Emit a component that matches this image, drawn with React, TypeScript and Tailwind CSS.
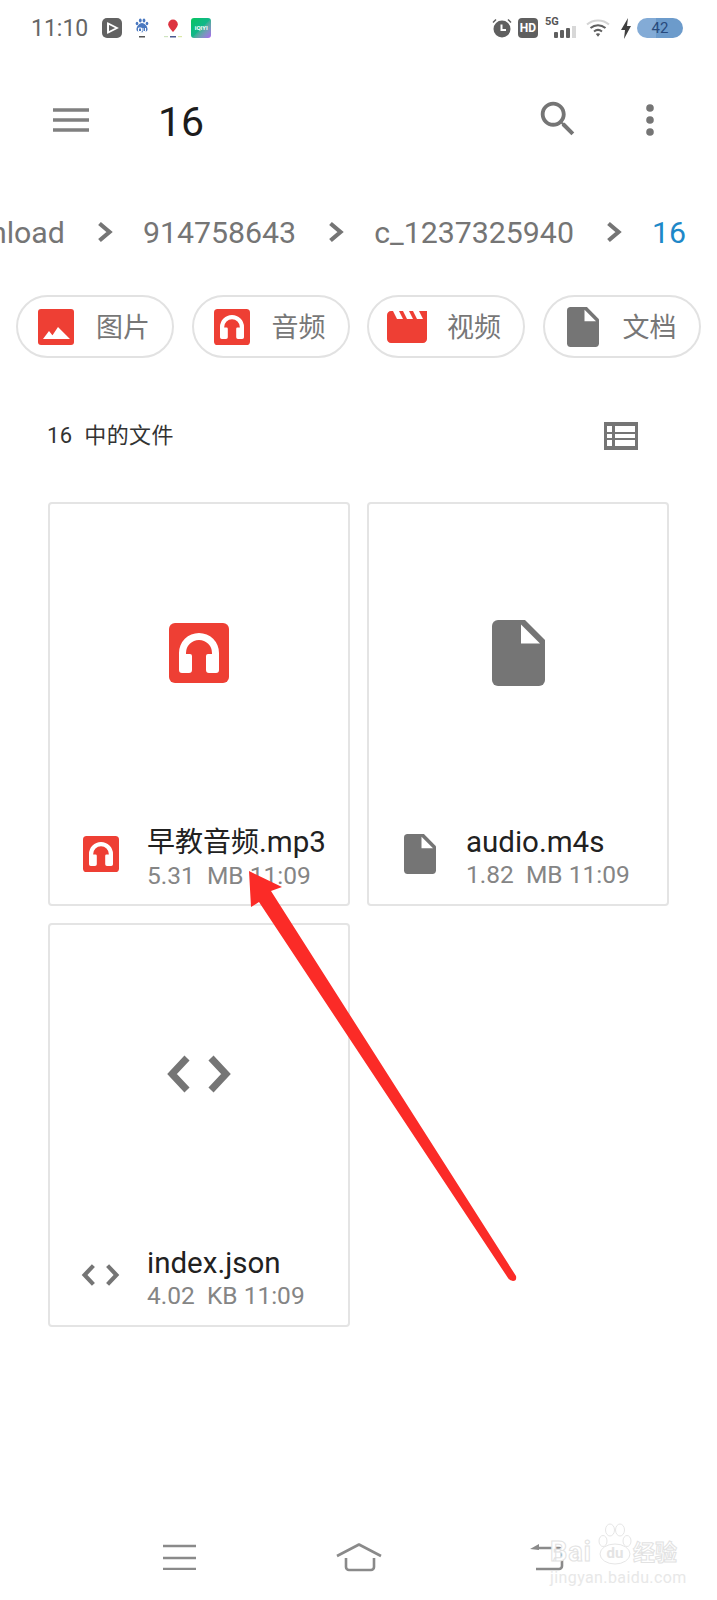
const RED = "#ee3f34";
const GREY = "#757575";

function AudioIcon({ size }: { size: number }) {
  return (
    <svg width={size} height={size} viewBox="0 0 60 60" className="shrink-0">
      <rect width="60" height="60" rx="6" fill={RED} />
      <path
        d="M10 30A20 20 0 0 1 50 30V47a3 3 0 0 1-3 3H40a3 3 0 0 1-3-3V33a2 2 0 0 1 2-2H43V30A13 13 0 0 0 17 30V31H21a2 2 0 0 1 2 2V47a3 3 0 0 1-3 3H13a3 3 0 0 1-3-3Z"
        fill="#fff"
      />
    </svg>
  );
}

function DocIcon({ w, h }: { w: number; h: number }) {
  return (
    <svg width={w} height={h} viewBox="0 0 53 66" className="shrink-0">
      <path d="M6 0H33L53 20V60a6 6 0 0 1-6 6H6a6 6 0 0 1-6-6V6a6 6 0 0 1 6-6Z" fill={GREY} />
      <path d="M29 4.5 48 23.5H29Z" fill="#fff" />
    </svg>
  );
}

function CodeIcon({ w, h, sw }: { w: number; h: number; sw: number }) {
  return (
    <svg width={w} height={h} viewBox="0 0 66 38" className="shrink-0">
      <path d="M21 3 6 19 21 35M45 3 60 19 45 35" fill="none" stroke={GREY} strokeWidth={sw} />
    </svg>
  );
}

function ImageIcon() {
  return (
    <svg width="36" height="36" viewBox="0 0 36 36" className="shrink-0">
      <rect width="36" height="36" rx="3" fill={RED} />
      <path d="M12 30 20 18 32 30ZM5 30 11 22 15 27 13 30Z" fill="#fff" />
    </svg>
  );
}

function MovieIcon() {
  return (
    <svg width="40" height="32" viewBox="2 4 20 16" className="shrink-0">
      <path
        d="M18 4l2 4h-3l-2-4h-2l2 4h-3l-2-4H8l2 4H7L5 4H4c-1.1 0-1.99.9-1.99 2L2 18c0 1.1.9 2 2 2h16c1.1 0 2-.9 2-2V4h-4z"
        fill={RED}
      />
    </svg>
  );
}

function Chevron() {
  return (
    <svg width="16" height="22" viewBox="0 0 16 22" className="ml-[32px] mr-[30px] shrink-0 -mt-[2px]">
      <path d="M2.5 2.5 12.5 11 2.5 19.5" fill="none" stroke={GREY} strokeWidth="4.2" />
    </svg>
  );
}

function Chip({ icon, label }: { icon: React.ReactNode; label: string }) {
  return (
    <div className="flex h-[63px] w-[158px] shrink-0 items-center gap-[2px] rounded-full border-2 border-[#e2e2e2]">
      <div className="flex w-[76px] shrink-0 justify-center">{icon}</div>
      <span className="pt-[3px] text-[27px] leading-none text-[#777777]">{label}</span>
    </div>
  );
}

function Card({
  big,
  small,
  name,
  meta,
}: {
  big: React.ReactNode;
  small: React.ReactNode;
  name: React.ReactNode;
  meta: string;
}) {
  return (
    <div className="flex h-[404px] flex-col rounded-[4px] border-2 border-[#e4e4e4]">
      <div className="flex h-[300px] shrink-0 items-center justify-center pb-[2px]">{big}</div>
      <div className="flex flex-1 items-center pl-[4px]">
        <div className="flex w-[93px] shrink-0 justify-center">{small}</div>
        <div className="flex flex-col pt-[7px]">
          <span className="text-[29.5px] leading-[34px] text-[#212121]">{name}</span>
          <span className="whitespace-pre text-[24.5px] leading-[31px] text-[#858585]">{meta}</span>
        </div>
      </div>
    </div>
  );
}

function StatusLeft() {
  return (
    <div className="flex items-center">
      <span className="text-[23px] leading-none text-[#666666]">11:10</span>
      <svg width="20" height="20" viewBox="0 0 20 20" className="ml-[14px]">
        <rect width="20" height="20" rx="5" fill="#626262" />
        <path d="M6 5.5V14.5L15 10Z" fill="none" stroke="#fff" strokeWidth="1.7" />
        <rect x="5.2" y="5" width="1.8" height="10" fill="#fff" />
      </svg>
      <svg width="14" height="20" viewBox="0 0 14 20" className="ml-[13px]">
        <ellipse cx="2" cy="5.5" rx="1.3" ry="1.8" fill="#4a78c0" />
        <ellipse cx="5.3" cy="2.5" rx="1.4" ry="2" fill="#4a78c0" />
        <ellipse cx="9" cy="2.5" rx="1.4" ry="2" fill="#4a78c0" />
        <ellipse cx="12" cy="5.5" rx="1.3" ry="1.8" fill="#4a78c0" />
        <path d="M7 5C4 5 1 9 1.5 12 2 15 12 15 12.500 12 13 9 10 5 7 5Z" fill="#4a78c0" />
        <path d="M3.500 10h3v3.500h-3ZM8 10v3.500h2.500V10" fill="none" stroke="#fff" strokeWidth="1" />
        <rect x="4" y="18" width="6" height="1.500" fill="#555" />
      </svg>
      <svg width="18" height="20" viewBox="0 0 18 20" className="ml-[15px]">
        <path d="M9 1.500a4.800 4.800 0 0 1 4.800 4.800C13.800 9.500 9 14 9 14S4.200 9.500 4.200 6.300A4.800 4.800 0 0 1 9 1.500Z" fill="#dd3340" />
        <rect x="6" y="18" width="6" height="1.500" fill="#4a5a90" />
        <rect x="0" y="18" width="4" height="1.200" fill="#cfe5c0" />
        <rect x="14" y="18" width="4" height="1.200" fill="#dbe8a8" />
      </svg>
      <div className="ml-[9px] flex h-[20px] w-[20px] items-center justify-center rounded-[3px] bg-gradient-to-br from-[#08c65c] via-[#12b68a] to-[#a860f0]">
        <span className="text-[6px] font-bold leading-none text-white">iQIYI</span>
      </div>
    </div>
  );
}

function StatusRight() {
  return (
    <div className="flex items-center">
      <svg width="20" height="20" viewBox="0 0 20 20">
        <circle cx="10" cy="11" r="8.500" fill="#5f5f5f" />
        <path d="M9.500 6.500V12H14" fill="none" stroke="#fff" strokeWidth="2" />
        <path d="M1 4.500 4 1.500M19 4.500 16 1.500" stroke="#5f5f5f" strokeWidth="1.500" />
      </svg>
      <div className="ml-[6px] flex h-[20px] w-[20px] items-center justify-center rounded-[4px] bg-[#5f5f5f]">
        <span className="text-[12px] font-bold leading-none text-white">HD</span>
      </div>
      <div className="relative ml-[7px] h-[22px] w-[32px]">
        <span className="absolute left-0 top-[-2px] text-[11px] font-bold leading-[14px] text-[#555555]">5G</span>
        <svg width="32" height="22" viewBox="0 0 32 22" className="absolute left-0 top-0">
          <rect x="9" y="15" width="4" height="6" rx="1" fill="#5f5f5f" />
          <rect x="15" y="13" width="4" height="8" rx="1" fill="#5f5f5f" />
          <rect x="21" y="11" width="4" height="10" rx="1" fill="#5f5f5f" />
          <rect x="27" y="9" width="4" height="12" fill="#d8d8d8" />
        </svg>
      </div>
      <svg width="24" height="20" viewBox="0 0 24 20" className="ml-[9px]">
        <path d="M1 6.500C7 1 17 1 23 6.500" fill="none" stroke="#d4d4d4" strokeWidth="2" />
        <path d="M4.500 10C9 6.200 15 6.200 19.500 10" fill="none" stroke="#5f5f5f" strokeWidth="2" />
        <path d="M8 13.500C10.500 11.500 13.500 11.500 16 13.500" fill="none" stroke="#5f5f5f" strokeWidth="2" />
        <path d="M9.800 16 12 18.800 14.200 16C13 15 11 15 9.800 16Z" fill="#5f5f5f" />
      </svg>
      <svg width="12" height="21" viewBox="0 0 12 21" className="ml-[10px]">
        <path d="M8 0 1 12H5L4 21 11 8H7Z" fill="#3f3f3f" />
      </svg>
      <div className="ml-[5px] flex h-[20px] w-[46px] items-center justify-center rounded-full bg-gradient-to-r from-[#83abd6] from-[41%] to-[#6c9bcb] to-[41%]">
        <span className="text-[15px] leading-none text-[#284a7c]">42</span>
      </div>
    </div>
  );
}

function Watermark() {
  return (
    <div className="absolute left-[550px] top-[1523px] flex w-[128px] flex-col">
      <div className="flex h-[42px] items-end">
        <span className="w-[47px] shrink-0 text-[27px] font-bold leading-[26px] tracking-[1px] text-white [-webkit-text-stroke:1px_#e2e2e2]">
          Bai
        </span>
        <div className="relative h-[42px] w-[35px] shrink-0">
          <svg width="35" height="42" viewBox="0 0 35 42" className="absolute left-0 top-0">
            <ellipse cx="6" cy="18" rx="4" ry="5.500" fill="#fff" stroke="#e6e6e6" />
            <ellipse cx="13" cy="7" rx="4.500" ry="6" fill="#fff" stroke="#e6e6e6" />
            <ellipse cx="23" cy="7" rx="4.500" ry="6" fill="#fff" stroke="#e6e6e6" />
            <ellipse cx="30" cy="18" rx="4" ry="5.500" fill="#fff" stroke="#e6e6e6" />
            <ellipse cx="18" cy="31" rx="15" ry="10" fill="#fff" stroke="#e6e6e6" />
          </svg>
          <span className="absolute bottom-[4px] left-0 w-[36px] text-center text-[15px] font-bold leading-none text-[#e4e4e4]">
            du
          </span>
        </div>
        <span className="ml-[1px] shrink-0 text-[22px] font-bold leading-[24px] text-white [-webkit-text-stroke:1px_#e2e2e2]">
          经验
        </span>
      </div>
      <span className="mt-[5px] whitespace-nowrap text-[16px] leading-[16px] tracking-[0.4px] text-[#e8e8e8]">
        jingyan.baidu.com
      </span>
    </div>
  );
}

export default function App() {
  return (
    <div className="relative flex h-[1600px] w-[717px] flex-col overflow-hidden bg-white font-[Roboto,'Noto_Sans_CJK_SC',sans-serif]">
      <div className="flex h-[56px] shrink-0 items-center justify-between pl-[31px] pr-[34px]">
        <StatusLeft />
        <StatusRight />
      </div>

      <div className="flex h-[128px] shrink-0 items-center pl-[53px]">
        <svg width="36" height="24" viewBox="0 0 36 24" className="-mt-[1px] shrink-0">
          <path d="M0 2H36M0 12H36M0 22H36" stroke="#808080" strokeWidth="3.600" />
        </svg>
        <span className="ml-[69px] mt-[4px] text-[41px] leading-none text-[#1c1c1c]">16</span>
        <svg width="46" height="46" viewBox="0 0 24 24" className="ml-[331px] -mt-[2px] shrink-0">
          <path
            d="M15.500 14h-.79l-.28-.27C15.410 12.590 16 11.110 16 9.500 16 5.910 13.090 3 9.500 3S3 5.910 3 9.500 5.910 16 9.500 16c1.610 0 3.090-.59 4.230-1.570l.27.28v.79l5 4.990L20.490 19l-4.990-5zm-6 0C7.010 14 5 11.990 5 9.500S7.010 5 9.500 5 14 7.010 14 9.500 11.990 14 9.500 14z"
            fill={GREY}
          />
        </svg>
        <svg width="8" height="32" viewBox="0 0 8 32" className="ml-[65px] shrink-0">
          <circle cx="4" cy="4" r="3.800" fill={GREY} />
          <circle cx="4" cy="16" r="3.800" fill={GREY} />
          <circle cx="4" cy="28" r="3.800" fill={GREY} />
        </svg>
      </div>

      <div className="mt-[24px] flex h-[50px] shrink-0 items-center justify-end overflow-hidden pr-[31px] text-[30.3px] leading-none text-[#757575]">
        <span className="shrink-0">Download</span>
        <Chevron />
        <span className="shrink-0">914758643</span>
        <Chevron />
        <span className="shrink-0">c_1237325940</span>
        <Chevron />
        <span className="shrink-0 text-[#1e88c8]">16</span>
      </div>

      <div className="mt-[37px] flex shrink-0 gap-[17.5px] pl-[16px]">
        <Chip icon={<ImageIcon />} label="图片" />
        <Chip icon={<AudioIcon size={36} />} label="音频" />
        <Chip icon={<MovieIcon />} label="视频" />
        <Chip icon={<DocIcon w={32} h={40} />} label="文档" />
      </div>

      <div className="mt-[60px] flex h-[36px] shrink-0 items-center justify-between pl-[47px] pr-[79px]">
        <span className="whitespace-pre text-[22px] leading-none tracking-[0.4px] text-[#333333]">16  中的文件</span>
        <svg width="34" height="28" viewBox="0 0 34 28" className="shrink-0">
          <path
            fillRule="evenodd"
            d="M0 0H34V28H0ZM3 4V10H8V4ZM11 4V10H31V4ZM3 12V16H8V12ZM11 12V16H31V12ZM3 18V24H8V18ZM11 18V24H31V18Z"
            fill={GREY}
          />
        </svg>
      </div>

      <div className="mt-[48px] grid shrink-0 grid-cols-2 gap-[17px] px-[48px]">
        <Card
          big={<AudioIcon size={60} />}
          small={<AudioIcon size={36} />}
          name={
            <>
              <span className="text-[28px]">早教音频</span>.mp3
            </>
          }
          meta="5.31  MB 11:09"
        />
        <Card
          big={<DocIcon w={53} h={66} />}
          small={<DocIcon w={32} h={40} />}
          name="audio.m4s"
          meta="1.82  MB 11:09"
        />
        <Card
          big={<CodeIcon w={66} h={38} sw={7} />}
          small={<CodeIcon w={39} h={24} sw={7} />}
          name="index.json"
          meta="4.02  KB 11:09"
        />
      </div>

      <div className="mt-auto flex h-[80px] shrink-0 items-start pl-[163px] pt-[24px]">
        <svg width="33" height="26" viewBox="0 0 33 26" className="shrink-0">
          <path d="M0 2H33M0 14H33M0 25H33" stroke="#8a8a8a" strokeWidth="2.600" />
        </svg>
        <svg width="46" height="30" viewBox="0 0 46 30" className="ml-[140px] -mt-[1px] shrink-0">
          <path d="M1 13 23 1.500 45 13" fill="none" stroke="#8a8a8a" strokeWidth="2.600" strokeLinejoin="round" />
          <path d="M10 15V24a3 3 0 0 0 3 3H35a3 3 0 0 0 3-3V15" fill="none" stroke="#8a8a8a" strokeWidth="2.600" />
        </svg>
        <svg width="34" height="28" viewBox="0 0 34 28" className="ml-[148px] shrink-0">
          <path d="M7 4H29a3 3 0 0 1 3 3V22a3 3 0 0 1-3 3H6" fill="none" stroke="#8a8a8a" strokeWidth="2.600" />
          <path d="M0 5 9 0V6Z" fill="#8a8a8a" />
        </svg>
      </div>

      <Watermark />

      <svg width="717" height="1600" viewBox="0 0 717 1600" className="pointer-events-none absolute left-0 top-0">
        <path
          d="M249 871 282 887 271 891 516 1276Q517 1281 513 1281 510 1281 508 1278L259 902 251 907Z"
          fill="#fb2b27"
        />
      </svg>
    </div>
  );
}
